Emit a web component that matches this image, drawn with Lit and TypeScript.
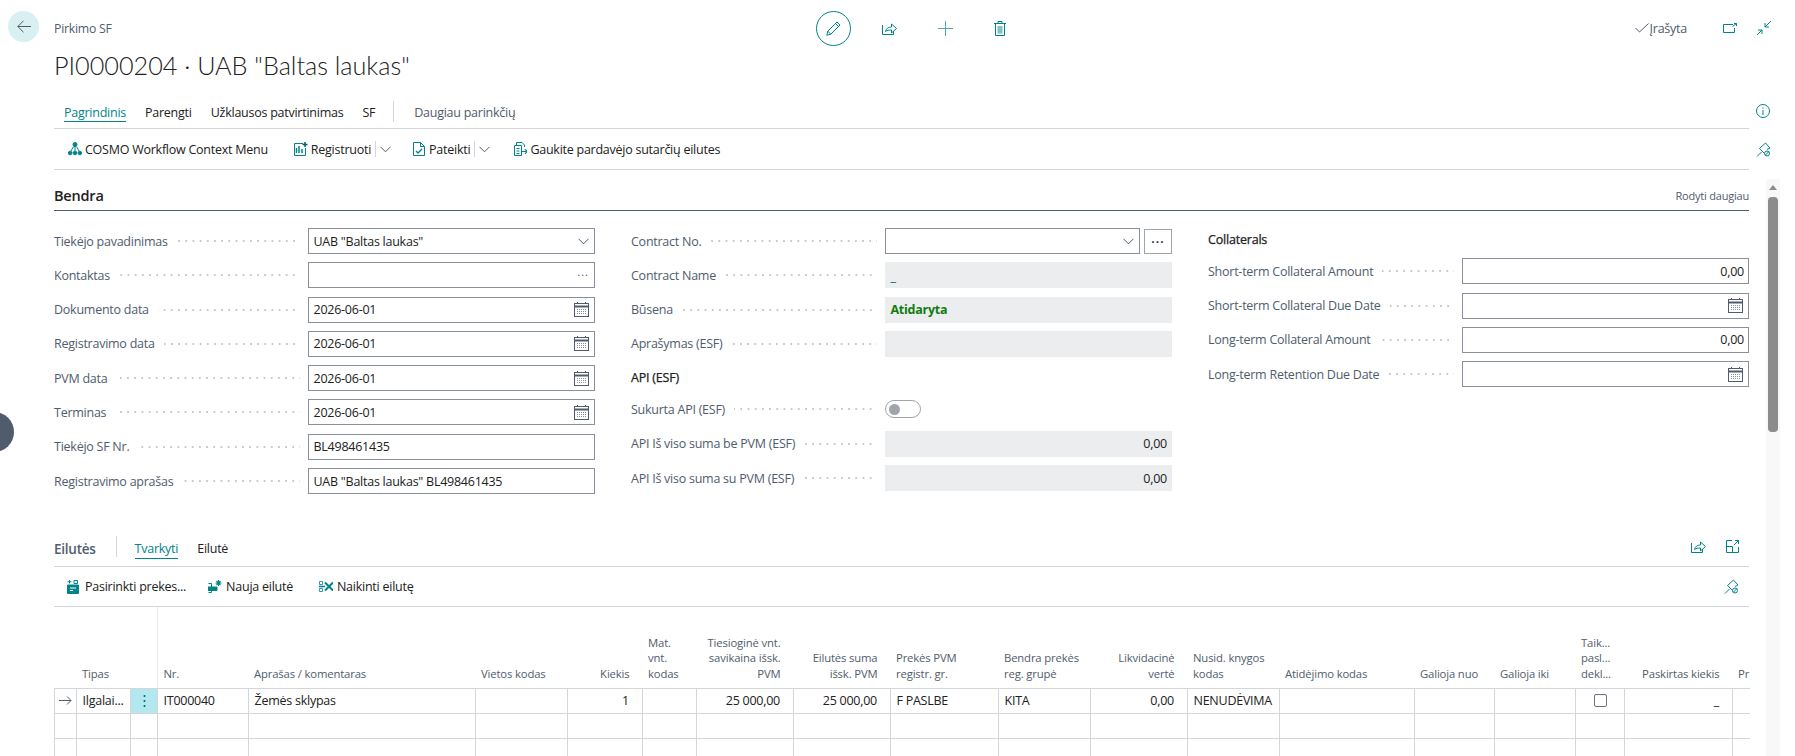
import { LitElement, html, css, svg } from "lit";
import { customElement } from "lit/decorators.js";

const ic = (w: number, h: number, body: unknown, cls = "ico") =>
  html`<svg class=${cls} width=${w} height=${h} viewBox="0 0 ${w} ${h}" fill="none" stroke="currentColor" stroke-width="1">${body}</svg>`;

const CAL = ic(15, 15, svg`<rect x=".5" y="1.5" width="14" height="13" stroke="#505c6d"/><path d="M.5 4.5h14" stroke="#505c6d" stroke-width="2"/><path d="M3.5 0v2M11.5 0v2" stroke="#505c6d"/><path d="M3 7.5h9M3 9.5h9M3 11.500h9" stroke="#8a919c" stroke-dasharray="1 1"/>`);
const CHEV = ic(11, 7, svg`<path d="M.5 .8l5 5 5-5" stroke="#505c6d"/>`);
const PIN = ic(15, 15, svg`<path d="M1 14.500l4.500-4.500M3.500 6.500L9.500 1l4.500 5-3 1.500M3.500 6.500l5 5"/><circle cx="11" cy="11.500" r="2.500"/><path d="M9.300 13.200l3.400-3.400"/>`);
const SHARE = ic(15, 13, svg`<path d="M.5 3v9.500h11V9"/><path d="M3.500 9.500c.5-3 3-4.500 6-4.500V2l5 4.500-5 4.500V8c-2.500 0-4.500.3-6 1.500z"/>`);

type Col = { w: number; h?: string; v?: string; right?: boolean; cls?: string };
const COLS: Col[] = [
  { w: 22 },
  { w: 54, h: "Tipas", v: "Ilgalai..." },
  { w: 27, cls: "menu" },
  { w: 91, h: "Nr.", v: "IT000040" },
  { w: 227, h: "Aprašas / komentaras", v: "Žemės sklypas" },
  { w: 92, h: "Vietos kodas" },
  { w: 75, h: "Kiekis", v: "1", right: true },
  { w: 54, h: "Mat. vnt. kodas" },
  { w: 97, h: "Tiesioginė vnt. savikaina išsk. PVM", v: "25 000,00", right: true },
  { w: 97, h: "Eilutės suma išsk. PVM", v: "25 000,00", right: true },
  { w: 108, h: "Prekės PVM registr. gr.", v: "F PASLBE" },
  { w: 92, h: "Bendra prekės reg. grupė", v: "KITA" },
  { w: 97, h: "Likvidacinė vertė", v: "0,00", right: true },
  { w: 92, h: "Nusid. knygos kodas", v: "NENUDĖVIMA" },
  { w: 135, h: "Atidėjimo kodas" },
  { w: 80, h: "Galioja nuo" },
  { w: 81, h: "Galioja iki" },
  { w: 49, h: "Taik... pasl... dekl...", cls: "chk" },
  { w: 108, h: "Paskirtas kiekis", v: "_", right: true },
  { w: 17.5, h: "Pr" },
];

@customElement("app-root")
export class AppRoot extends LitElement {
  static styles = css`
    :host { display: block; width: 1795px; height: 756px; overflow: hidden; background: #fff; position: relative;
      font-family: "Open Sans", "Noto Sans", sans-serif; font-size: 12.5px; letter-spacing: -0.25px; color: #212121; --teal: #00848a; --lab: #505c6d; --line: #d4d6da; }
    svg { display: block; flex: none; }
    .ico { color: var(--teal); }
    .top { display: grid; grid-template-columns: 54px 762px auto 1fr auto; height: 51px; }
    .back { width: 31px; height: 31px; border-radius: 50%; background: #d9f0f2; margin: 11px 0 0 8px; display: flex; align-items: center; justify-content: center; color: var(--lab); }
    .crumb { color: var(--lab); padding-top: 20px; line-height: 18px; font-size: 12.3px; }
    .center { display: flex; align-items: center; height: 56px; }
    .edit { width: 33px; height: 33px; border: 1px solid var(--teal); border-radius: 50%; display: flex; align-items: center; justify-content: center; margin-right: 31px; }
    .gap41 { width: 41px; }
    .right { display: flex; align-items: center; height: 56px; grid-column: 5; padding-right: 24px; color: var(--lab); }
    .saved { display: flex; align-items: center; gap: 1px; margin-right: 36px; }
    .gap19 { width: 19px; }
    .title { margin: 0; padding-left: 54px; height: 28px; line-height: 28px; font-family: "Lato", "Open Sans", sans-serif; font-size: 25.2px; font-weight: 300; letter-spacing: 0; color: #212121; }
    .bar { display: flex; padding-left: 54px; }
    .bar.tabsbar { margin-top: 17px; height: 33px; }
    .bar-main { width: 1695px; flex: none; display: flex; align-items: center; border-bottom: 1px solid var(--line); box-sizing: border-box; }
    .bar-side { margin-left: 7px; display: flex; align-items: center; }
    .tabsbar .bar-side { padding-bottom: 4px; }
    .tabs { align-items: flex-start; padding-left: 10px; }
    .tab { margin: 8px 19px 0 0; line-height: 18px; height: 18px; color: #212121; white-space: nowrap; }
    .tab.on { color: var(--teal); border-bottom: 1px solid var(--teal); height: 17px; }
    .tab.last { margin-right: 0; }
    .tsep { width: 1px; height: 21px; margin: 5px 20px 0 18px; background: var(--line); }
    .more { color: var(--lab); }
    .tools { height: 41px; padding-left: 14px; }
    .tool { display: flex; align-items: center; gap: 3px; white-space: nowrap; }
    .tool.g4 { gap: 4px; }
    .tool.g6 { gap: 6px; }
    .sp22 { width: 22px; } .sp24 { width: 24px; } .sp26 { width: 26px; }
    .vsep { width: 1px; height: 16px; background: var(--line); margin: 0 4.5px 0 3.5px; }
    .body { display: flex; height: 586px; }
    .content { width: 1695px; margin-left: 54px; flex: none; }
    .scroll { width: 14.5px; margin: 9px 0 0 16.5px; background: #f8f8f8; display: flex; flex-direction: column; align-items: center; }
    .arrow { width: 0; height: 0; border: 4.5px solid transparent; border-top: 0; border-bottom: 5px solid #8c8c8c; margin: 6px 0 7px; }
    .thumb { width: 9.5px; height: 235px; background: #8c8c8c; border-radius: 4px; }
    .sechead { display: flex; justify-content: space-between; align-items: flex-end; height: 41px; border-bottom: 1px solid var(--lab); padding-bottom: 4px; box-sizing: border-box; }
    .sechead b { font-weight: 600; font-size: 14.5px; line-height: 20px; color: #212121; letter-spacing: -0.2px; }
    .sechead span { color: var(--lab); font-size: 11px; line-height: 16px; margin-bottom: 2px; letter-spacing: -0.2px; }
    .form { display: grid; grid-template-columns: 541px 541px 541px; column-gap: 36px; margin-top: 17px; align-items: start; }
    .col { display: flex; flex-direction: column; gap: 8.3px; }
    .row { display: flex; height: 26px; align-items: center; }
    .lab { width: 254px; flex: none; display: flex; align-items: center; color: var(--lab); white-space: nowrap; }
    .dots { flex: 1; height: 2px; margin: 0 8px 0 9px; background-image: radial-gradient(circle at 1px 1px, #c6c9ce 0.8px, transparent 1px); background-size: 7.2px 2px; background-position: right; }
    .f { flex: 1; min-width: 0; height: 26px; box-sizing: border-box; border: 1px solid #8a909b; display: flex; align-items: center; justify-content: space-between; padding: 0 5px 0 4.5px; white-space: nowrap; }
    .f.ro { border-color: transparent; background: #ecedee; }
    .num { justify-content: flex-end; padding-right: 4px; }
    .ell { color: var(--lab); letter-spacing: 1px; line-height: 10px; font-size: 11px; margin-bottom: 6px; }
    .st { color: #107c10; font-weight: 700; }
    .dash { color: #00606b; align-self: flex-end; line-height: 20px; }
    .sub { height: 23px; display: flex; align-items: flex-end; line-height: 20px; color: #212121; letter-spacing: -0.2px; -webkit-text-stroke: 0.25px #212121; }
    .colhead { height: 22px; }
    .btn3 { width: 28px; height: 25px; box-sizing: border-box; border: 1px solid #a0a5ad; margin-left: 4px; flex: none; display: flex; align-items: center; justify-content: center; font-weight: 600; letter-spacing: 1px; padding-bottom: 5px; }
    .toggle { width: 36px; height: 18px; box-sizing: border-box; border: 1px solid #a0a5ad; border-radius: 9px; display: flex; align-items: center; padding-left: 3px; }
    .toggle i { width: 11px; height: 11px; border-radius: 50%; background: #a0a5ad; }
    .lines { margin-top: 35px; }
    .ltabs { height: 38px; align-items: flex-start; border-bottom: 1px solid var(--line); display: flex; box-sizing: border-box; width: 1695px; padding-top: 4px; }
    .ltitle { line-height: 18px; color: var(--lab); font-weight: 600; font-size: 13.5px; margin-top: 7px; }
    .lsep { width: 1px; height: 21px; margin: 3px 18px 0 20px; background: var(--line); }
    .ltab { margin: 7px 19px 0 0; line-height: 18px; height: 18px; white-space: nowrap; }
    .ltab.on { color: var(--teal); border-bottom: 1px solid var(--teal); }
    .lhr { display: flex; gap: 20px; margin-left: auto; margin-top: 7px; padding-right: 10px; }
    .ltools { height: 40px; display: flex; align-items: center; border-bottom: 1px solid var(--line); box-sizing: border-box; padding: 0 10px 0 13px; }
    .pinr { margin-left: auto; }
    table { border-collapse: collapse; table-layout: fixed; width: 1695px; }
    th { height: 81px; box-sizing: border-box; vertical-align: bottom; font-weight: 400; color: var(--lab); text-align: left; line-height: 15.3px; padding: 0 5px 6.5px 5.5px; font-size: 11.3px; overflow: hidden; letter-spacing: -0.15px; border-bottom: 1px solid var(--line); }
    th.nrb { border-left: 1px solid #ececee; }
    th.r { text-align: right; padding-right: 13px; }
    td { height: 25px; box-sizing: border-box; border: 1px solid var(--line); padding: 0 5.5px; white-space: nowrap; overflow: hidden; border-top: 0; line-height: 18px; }
    td.r { text-align: right; padding-right: 13px; }
    td:last-child, th:last-child { border-right: 0; padding-right: 0; }
    td.menu { padding: 0; text-align: center; color: var(--lab); }
    td.menu.sel { background: #b2e8ee; color: #00606b; }
    td.menu svg { margin: auto; }
    td.arr svg { margin: auto; color: var(--lab); }
    td.arr, td.chk { padding: 0; }
    .cb { width: 11px; height: 11px; border: 1px solid #6d7582; border-radius: 2px; margin: auto; }
    .blob { position: absolute; left: -26px; top: 412px; width: 40px; height: 40px; border-radius: 50%; background: var(--lab); }
  `;

  private field(label: string, inner: unknown) {
    return html`<div class="row"><div class="lab">${label}<span class="dots"></span></div>${inner}</div>`;
  }

  private renderTable() {
    const cell = (c: Col, i: number, row: number) => {
      const right = c.right ? "r" : "";
      if (i === 0) return html`<td class="arr">${row === 0 ? ic(13, 9, svg`<path d="M0 4.500h12M8 .5l4 4-4 4" stroke="currentColor"/>`) : ""}</td>`;
      if (c.cls === "menu") return html`<td class="menu ${row === 0 ? "sel" : ""}">${row === 0 ? html`<svg width="3" height="14" viewBox="0 0 3 14" fill="currentColor"><circle cx="1.5" cy="2" r="1"/><circle cx="1.5" cy="7" r="1"/><circle cx="1.5" cy="12" r="1"/></svg>` : ""}</td>`;
      if (c.cls === "chk") return html`<td class="chk">${row === 0 ? html`<div class="cb"></div>` : ""}</td>`;
      return html`<td class=${right}>${row === 0 ? (c.v ?? "") : ""}</td>`;
    };
    return html`<table>
      <colgroup>${COLS.map((c) => html`<col style="width:${c.w}px" />`)}</colgroup>
      <thead><tr>${COLS.map((c, i) => html`<th class="${c.right ? "r" : ""} ${i === 3 ? "nrb" : ""}">${c.h ?? ""}</th>`)}</tr></thead>
      <tbody>${[0, 1, 2].map((r) => html`<tr>${COLS.map((c, i) => cell(c, i, r))}</tr>`)}</tbody>
    </table>`;
  }

  render() {
    const date = html`<div class="f">2026-06-01${CAL}</div>`;
    return html`
      <div class="top">
        <div class="back">${ic(14, 13, svg`<path d="M14 6.500H.8M6.500.8L.8 6.500l5.700 5.700" stroke="#505c6d"/>`)}</div>
        <div class="crumb">Pirkimo SF</div>
        <div class="center">
          <div class="edit">${ic(15, 15, svg`<path d="M.8 14.200l1-4L11 1l3 3-9.200 9.200zM9.500 2.500l3 3M1.800 10.200l3 3"/>`)}</div>
          ${ic(15, 13, svg`<path d="M.5 3v9.500h11V9"/><path d="M3.500 9.500c.5-3 3-4.500 6-4.500V2l5 4.500-5 4.500V8c-2.500 0-4.500.3-6 1.500z"/>`)}
          <span class="gap41"></span>
          ${ic(15, 15, svg`<path d="M7.500 0v15M0 7.500h15" stroke="#4fa9ad"/>`)}
          <span class="gap41"></span>
          ${ic(12, 15, svg`<path d="M1.500 3v11.500h9V3M0 2.500h12M4 2.500V.5h4v2"/><rect x="3.500" y="5" width="5" height="7.500" fill="#7fc2c5" stroke="none"/>`)}
        </div>
        <div class="right">
          <div class="saved">${ic(14, 10, svg`<path d="M.5 5l4 4 9-8.500" stroke="#505c6d"/>`)}<span>Įrašyta</span></div>
          ${ic(14, 10, svg`<path d="M10 1.500H.5v8h11V5M9.500 3.500l4-3M11 .5h2.500V3"/>`)}
          <span class="gap19"></span>
          ${ic(15, 15, svg`<path d="M9 6L15 0M9 2v4h4M6 9L1 14M2 9h4v4"/>`)}
        </div>
      </div>
      <h1 class="title">PI0000204 · UAB "Baltas laukas"</h1>
      <div class="bar tabsbar">
        <div class="bar-main tabs">
          <span class="tab on">Pagrindinis</span>
          <span class="tab">Parengti</span>
          <span class="tab">Užklausos patvirtinimas</span>
          <span class="tab last">SF</span>
          <span class="tsep"></span>
          <span class="tab more">Daugiau parinkčių</span>
        </div>
        <div class="bar-side">${ic(14, 14, svg`<circle cx="7" cy="7" r="6.500"/><path d="M7 6v5M7 3.500v1.200"/>`)}</div>
      </div>
      <div class="bar">
        <div class="bar-main tools">
          <div class="tool">${ic(14, 14, svg`<circle cx="7" cy="2.500" r="2" fill="currentColor"/><circle cx="2.200" cy="11" r="1.800" fill="currentColor"/><circle cx="11.800" cy="11" r="1.800" fill="currentColor"/><circle cx="7" cy="11" r="1.800" fill="currentColor"/><path d="M7 4v5M5.500 4.500L3 9M8.500 4.500L11 9"/>`)}COSMO Workflow Context Menu</div>
          <span class="sp26"></span>
          <div class="tool">${ic(14, 14, svg`<path d="M9 1.500H.5v12h11V6"/><path d="M2.500 11V6M5 11V4M8 11V7" stroke-width="1.500"/><path d="M11 0v5M8.500 2.500h5" stroke-width="1.500" stroke="#00606b"/>`)}Registruoti</div>
          <span class="vsep"></span>${CHEV}<span class="sp22"></span>
          <div class="tool g4">${ic(12, 14, svg`<path d="M.5.5h7l4 4v9H.5zM7.500.5v4h4"/><path d="M3 9l2 2 4-4" stroke-width="1.300"/>`)}Pateikti</div>
          <span class="vsep"></span>${CHEV}<span class="sp24"></span>
          <div class="tool">${ic(13, 14, svg`<path d="M2.500 3V.5H8L10.500 3v2M.5 3.500h7V13.500H.5z"/><path d="M2.500 6.500h3M2.500 9h3M2.500 11.500h3"/><path d="M8 9.500h5M11 7l2 2.500L11 12" stroke-width="1.200"/>`)}Gaukite pardavėjo sutarčių eilutes</div>
        </div>
        <div class="bar-side">${PIN}</div>
      </div>
      <div class="body">
        <div class="content">
          <div class="sechead"><b>Bendra</b><span>Rodyti daugiau</span></div>
          <div class="form">
            <div class="col">
              ${this.field("Tiekėjo pavadinimas", html`<div class="f">UAB "Baltas laukas"${CHEV}</div>`)}
              ${this.field("Kontaktas", html`<div class="f"><span></span><span class="ell">...</span></div>`)}
              ${this.field("Dokumento data", date)}
              ${this.field("Registravimo data", date)}
              ${this.field("PVM data", date)}
              ${this.field("Terminas", date)}
              ${this.field("Tiekėjo SF Nr.", html`<div class="f">BL498461435</div>`)}
              ${this.field("Registravimo aprašas", html`<div class="f">UAB "Baltas laukas" BL498461435</div>`)}
            </div>
            <div class="col">
              ${this.field("Contract No.", html`<div class="f"><span></span>${CHEV}</div><div class="btn3">...</div>`)}
              ${this.field("Contract Name", html`<div class="f ro"><span class="dash">_</span></div>`)}
              ${this.field("Būsena", html`<div class="f ro"><span class="st">Atidaryta</span></div>`)}
              ${this.field("Aprašymas (ESF)", html`<div class="f ro"></div>`)}
              <div class="sub">API (ESF)</div>
              ${this.field("Sukurta API (ESF)", html`<div class="toggle"><i></i></div>`)}
              ${this.field("API Iš viso suma be PVM (ESF)", html`<div class="f ro num">0,00</div>`)}
              ${this.field("API Iš viso suma su PVM (ESF)", html`<div class="f ro num">0,00</div>`)}
            </div>
            <div class="col">
              <div class="sub colhead">Collaterals</div>
              ${this.field("Short-term Collateral Amount", html`<div class="f num">0,00</div>`)}
              ${this.field("Short-term Collateral Due Date", html`<div class="f"><span></span>${CAL}</div>`)}
              ${this.field("Long-term Collateral Amount", html`<div class="f num">0,00</div>`)}
              ${this.field("Long-term Retention Due Date", html`<div class="f"><span></span>${CAL}</div>`)}
            </div>
          </div>
          <div class="lines">
            <div class="ltabs">
              <span class="ltitle">Eilutės</span><span class="lsep"></span>
              <span class="ltab on">Tvarkyti</span><span class="ltab">Eilutė</span>
              <div class="lhr">
                ${SHARE}
                ${ic(13, 13, svg`<path d="M6 .5H.5v12h12V7M.5 6.500h6v6M8 5l4.500-4.500M9 .5h3.500V4"/>`)}
              </div>
            </div>
            <div class="ltools">
              <div class="tool g6">${ic(12, 14, svg`<path d="M.5 5h11v8.500H.5z" fill="currentColor"/><path d="M3 8h6M3 10.500h3" stroke="#fff"/><path d="M2.500 0v3.500M.5 1.800h4M7 .5h3.500v3H7z"/>`)}Pasirinkti prekes...</div>
              <span class="sp22"></span>
              <div class="tool g4">${ic(14, 13, svg`<path d="M0 7h9v3.500H0z" fill="currentColor"/><path d="M.5 3.500h3V7M.5 12.500h3v-2"/><path d="M10.500 0v6M7.500 3h6M8.500 1l4 4M12.500 1l-4 4" stroke-width="1.100"/>`)}Nauja eilutė</div>
              <span class="sp26"></span>
              <div class="tool g4">${ic(14, 13, svg`<path d="M.5 1.500h3v3h-3zM.5 8.500h3v3h-3z" stroke-width=".8"/><path d="M0 6.500h6" stroke-width="1.600"/><path d="M6 2.500l8 8M14 2.500l-8 8" stroke-width="2"/>`)}Naikinti eilutę</div>
              <span class="pinr">${PIN}</span>
            </div>
            ${this.renderTable()}
          </div>
        </div>
        <div class="scroll"><span class="arrow"></span><span class="thumb"></span></div>
      </div>
      <div class="blob"></div>
    `;
  }
}
